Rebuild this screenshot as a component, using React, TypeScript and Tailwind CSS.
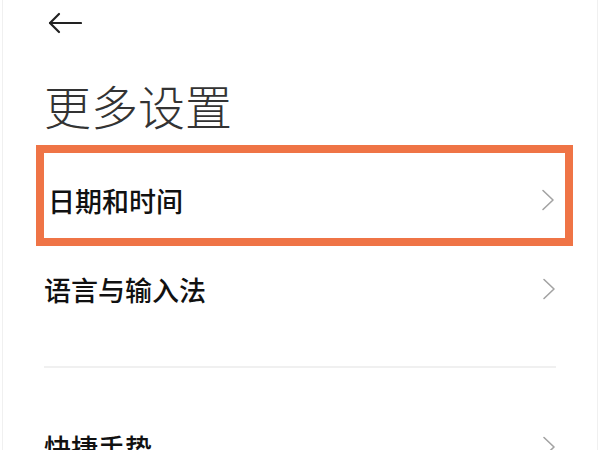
function Chevron() {
  return (
    <svg width="14" height="22" viewBox="0 0 14 22" fill="none" className="shrink-0">
      <polyline points="2,1.5 12,11 2,20.5" stroke="#a3a3a3" strokeWidth="1.6" strokeLinecap="round" strokeLinejoin="round" />
    </svg>
  );
}

function Row({ label }: { label: string }) {
  return (
    <div className="flex h-[86px] items-center justify-between">
      <span className="text-[27px] font-medium text-[#111] leading-none">{label}</span>
      <Chevron />
    </div>
  );
}

export default function App() {
  return (
    <div className="w-[600px] h-[450px] overflow-hidden bg-white px-[2px] font-['Noto_Sans_CJK_SC','Noto_Sans',sans-serif]">
      <div className="h-full border-x border-[#f0f0f0] px-[41px]">
        {/* top bar */}
        <div className="flex h-[46px] items-center pl-[4px]">
          <svg width="34" height="22" viewBox="0 0 34 22" fill="none">
            <line x1="2" y1="11" x2="33" y2="11" stroke="#222" strokeWidth="2.2" strokeLinecap="round" />
            <polyline points="11,2 2,11 11,20" stroke="#222" strokeWidth="2.2" strokeLinecap="round" strokeLinejoin="round" />
          </svg>
        </div>

        <h1 className="mt-[35px] text-[47px] font-light leading-none text-[#333]">更多设置</h1>

        {/* highlighted row */}
        <div className="mt-[17px] ml-[-8px] mr-[-17px] flex h-[101px] items-center justify-between border-[8px] border-[#ef7446] pt-[9px] pl-[4px] pr-[10px]">
          <span className="text-[27px] font-medium text-[#111] leading-none">日期和时间</span>
          <Chevron />
        </div>

        <Row label="语言与输入法" />

        <div className="mt-[34px] h-[2px] bg-[#f0f0f0]" />

        <div className="mt-[36px]">
          <Row label="快捷手势" />
        </div>
      </div>
    </div>
  );
}
